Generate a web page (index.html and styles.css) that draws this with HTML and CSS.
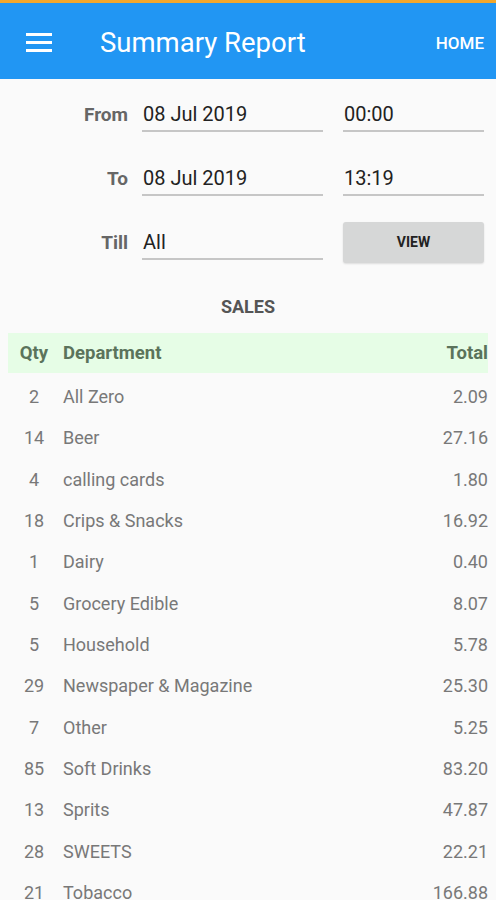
FILE: index.html
```html
<!DOCTYPE html>
<html>
<head>
<meta charset="utf-8">
<link rel="stylesheet" href="styles.css">
</head>
<body>
<div class="status"></div>
<header class="appbar">
  <svg class="menu" width="26" height="20" viewBox="0 0 26 20"><rect x="0" y="0" width="26" height="3" fill="#fff"/><rect x="0" y="8" width="26" height="3" fill="#fff"/><rect x="0" y="16" width="26" height="3" fill="#fff"/></svg>
  <div class="title">Summary Report</div>
  <div class="home">HOME</div>
</header>
<main class="content">
  <div class="form">
    <div class="label">From</div>
    <div class="field">08 Jul 2019</div>
    <div class="field side">00:00</div>
    <div class="label">To</div>
    <div class="field">08 Jul 2019</div>
    <div class="field side">13:19</div>
    <div class="label">Till</div>
    <div class="field">All</div>
    <button class="btn side">VIEW</button>
  </div>
  <div class="section">SALES</div>
  <div class="table">
    <div class="row head"><span class="qty">Qty</span><span class="dept">Department</span><span class="total">Total</span></div>
    <div class="row"><span class="qty">2</span><span class="dept">All Zero</span><span class="total">2.09</span></div>
    <div class="row"><span class="qty">14</span><span class="dept">Beer</span><span class="total">27.16</span></div>
    <div class="row"><span class="qty">4</span><span class="dept">calling cards</span><span class="total">1.80</span></div>
    <div class="row"><span class="qty">18</span><span class="dept">Crips &amp; Snacks</span><span class="total">16.92</span></div>
    <div class="row"><span class="qty">1</span><span class="dept">Dairy</span><span class="total">0.40</span></div>
    <div class="row"><span class="qty">5</span><span class="dept">Grocery Edible</span><span class="total">8.07</span></div>
    <div class="row"><span class="qty">5</span><span class="dept">Household</span><span class="total">5.78</span></div>
    <div class="row"><span class="qty">29</span><span class="dept">Newspaper &amp; Magazine</span><span class="total">25.30</span></div>
    <div class="row"><span class="qty">7</span><span class="dept">Other</span><span class="total">5.25</span></div>
    <div class="row"><span class="qty">85</span><span class="dept">Soft Drinks</span><span class="total">83.20</span></div>
    <div class="row"><span class="qty">13</span><span class="dept">Sprits</span><span class="total">47.87</span></div>
    <div class="row"><span class="qty">28</span><span class="dept">SWEETS</span><span class="total">22.21</span></div>
    <div class="row"><span class="qty">21</span><span class="dept">Tobacco</span><span class="total">166.88</span></div>
  </div>
</main>
</body>
</html>
```

FILE: styles.css
```css
html, body {
  margin: 0;
  padding: 0;
  background: #fafafa;
  font-family: Roboto, "Liberation Sans", sans-serif;
  overflow: hidden;
}
.status {
  height: 3px;
  background: #f2a72c;
}
.appbar {
  height: 76px;
  box-sizing: border-box;
  padding: 3px 12px 0 26px;
  background: #2196f3;
  display: flex;
  align-items: center;
  color: #fff;
}
.menu {
  display: block;
  flex: none;
}
.title {
  font-size: 27.5px;
  margin-left: 48px;
  flex: 1;
}
.home {
  font-size: 17px;
  font-weight: 500;
}
.content {
  padding: 17px 8px 0 8px;
}
.form {
  display: grid;
  grid-template-columns: 134px 181px 161px;
  column-gap: 0;
  row-gap: 28px;
}
.label {
  font-size: 19px;
  font-weight: 700;
  color: #666;
  text-align: right;
  line-height: 37px;
  height: 36px;
  align-self: end;
  padding-right: 14px;
}
.field {
  height: 34px;
  line-height: 37px;
  font-size: 20px;
  color: #222;
  border-bottom: 2px solid #c6c6c6;
  padding-left: 1px;
  align-self: end;
}
.side {
  margin-left: 20px;
}
.btn {
  align-self: center;
  height: 41px;
  margin-top: -3px;
  margin-bottom: -3px;
  border: none;
  border-radius: 3px;
  background: #d6d7d7;
  box-shadow: 0 1px 2px rgba(0,0,0,0.12);
  font-family: Roboto, "Liberation Sans", sans-serif;
  font-weight: 700;
  font-size: 14px;
  color: #222;
  padding: 0;
}
.section {
  text-align: center;
  font-weight: 700;
  font-size: 18px;
  color: #555;
  margin-top: 35px;
  line-height: 24px;
}
.table {
  margin-top: 14px;
}
.row {
  display: flex;
  align-items: center;
  height: 41.33px;
  font-size: 18px;
  color: #787878;
}
.row.head {
  height: 40px;
  margin-bottom: 3px;
  background: #e6fde6;
  font-weight: 700;
  font-size: 18.5px;
  color: #5b735b;
}
.qty {
  width: 52px;
  text-align: center;
  flex: none;
}
.dept {
  flex: 1;
  padding-left: 3px;
}
.total {
  text-align: right;
}
```
